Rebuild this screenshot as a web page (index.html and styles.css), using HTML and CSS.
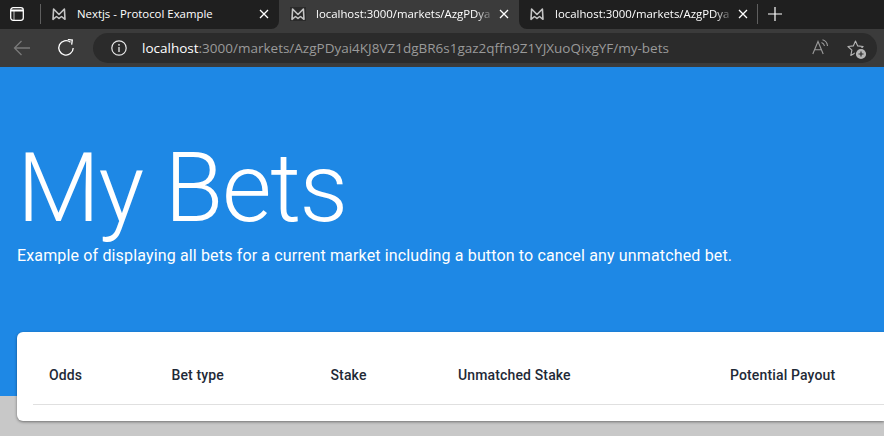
FILE: index.html
```html
<!DOCTYPE html>
<html lang="en">
<head>
<meta charset="utf-8">
<title>My Bets</title>
<link rel="stylesheet" href="styles.css">
</head>
<body>
<svg class="defs" width="0" height="0" aria-hidden="true">
  <symbol id="logo" viewBox="0 0 16 14">
    <path d="M2 12.300 L2.600 2 L8 7.500 L13.400 2 L14 12.300 L10.500 9.500 L8 11.500 L5.500 9.500 Z" fill="none" stroke="#c4c4c4" stroke-width="1.600" stroke-linejoin="round"/>
  </symbol>
  <symbol id="close" viewBox="0 0 10 10">
    <path d="M1 1 L9 9 M9 1 L1 9" stroke="#fff" stroke-width="1.300" fill="none"/>
  </symbol>
</svg>
<header class="browser">
  <div class="tabstrip">
    <div class="strip-start">
      <svg class="tabs-icon" width="14" height="14" viewBox="0 0 14 14"><rect x="0.700" y="0.700" width="12.600" height="12.600" rx="2.500" fill="none" stroke="#fff" stroke-width="1.300"/><path d="M1 3.500 H13" stroke="#fff" stroke-width="2"/><path d="M4 4 V13" stroke="#fff" stroke-width="0.700"/></svg>
      <span class="divider"></span>
    </div>
    <div class="tab tab-first">
      <svg class="favicon"><use href="#logo"/></svg>
      <span class="tab-title">Nextjs - Protocol Example</span>
      <svg class="tab-close"><use href="#close"/></svg>
    </div>
    <div class="tab tab-active">
      <svg class="favicon"><use href="#logo"/></svg>
      <span class="tab-title tab-fade">localhost:3000/markets/AzgPDya</span>
      <svg class="tab-close"><use href="#close"/></svg>
    </div>
    <div class="tab tab-third">
      <svg class="favicon"><use href="#logo"/></svg>
      <span class="tab-title tab-fade">localhost:3000/markets/AzgPDya</span>
      <svg class="tab-close"><use href="#close"/></svg>
    </div>
    <div class="strip-end">
      <span class="divider"></span>
      <svg class="new-tab" width="14" height="14" viewBox="0 0 14 14"><path d="M7 0 V14 M0 7 H14" stroke="#fff" stroke-width="1.200" fill="none"/></svg>
    </div>
  </div>
  <div class="toolbar">
    <svg class="nav-back" width="18" height="16" viewBox="0 0 18 16"><path d="M17 8 H2 M8.500 1 L1.500 8 L8.500 15" stroke="#7a7a7a" stroke-width="1.300" fill="none"/></svg>
    <svg class="nav-reload" width="18" height="18" viewBox="0 0 18 18"><path d="M13.500 3.200 A7.200 7.200 0 1 0 16.200 9" stroke="#fff" stroke-width="1.300" fill="none"/><path d="M10.500 0.800 H15 V5.300" stroke="#fff" stroke-width="1.300" fill="none" transform="rotate(8 13 3)"/></svg>
    <div class="address">
      <svg class="info" width="16" height="16" viewBox="0 0 16 16"><circle cx="8" cy="8" r="7.200" fill="none" stroke="#e8e8e8" stroke-width="1.200"/><path d="M8 7 V12" stroke="#e8e8e8" stroke-width="1.300"/><circle cx="8" cy="4.800" r="0.900" fill="#e8e8e8"/></svg>
      <span class="url"><span class="url-host">localhost</span>:3000/markets/AzgPDyai4KJ8VZ1dgBR6s1gaz2qffn9Z1YJXuoQixgYF/my-bets</span>
      <svg class="read-aloud" width="18" height="16" viewBox="0 0 18 16"><path d="M0.800 15 L6 2.500 L11.200 15 M2.700 10.800 H9.300" stroke="#9a9a9a" stroke-width="1.100" fill="none"/><path d="M9.500 3.500 A4.500 4.500 0 0 1 12.500 7 M10.500 0.800 A7 7 0 0 1 15.500 7" stroke="#9a9a9a" stroke-width="1.100" fill="none"/></svg>
      <svg class="favorite" width="20" height="20" viewBox="0 0 20 20"><path d="M8.500 1 L10.700 5.900 L16.100 6.500 L12.100 10.200 L13.200 15.500 L8.500 12.800 L3.800 15.500 L4.900 10.200 L0.900 6.500 L6.300 5.900 Z" stroke="#b5b5b5" stroke-width="1.100" stroke-linejoin="round" fill="none"/><circle cx="14" cy="14" r="5.700" fill="#b5b5b5" stroke="#2b2b2b" stroke-width="1.200"/><path d="M14 11.500 V16.500 M11.500 14 H16.500" stroke="#2b2b2b" stroke-width="1.200"/></svg>
    </div>
  </div>
</header>
<main class="page">
  <section class="hero">
    <h1 class="hero-title">My Bets</h1>
    <p class="hero-text">Example of displaying all bets for a current market including a button to cancel any unmatched bet.</p>
  </section>
  <section class="card">
    <table class="bets">
      <thead>
        <tr>
          <th class="col-odds">Odds</th>
          <th class="col-type">Bet type</th>
          <th class="col-stake">Stake</th>
          <th class="col-unmatched">Unmatched Stake</th>
          <th class="col-payout">Potential Payout</th>
        </tr>
      </thead>
    </table>
  </section>
</main>
</body>
</html>
```
FILE: styles.css
```css
* { box-sizing: border-box; }
html, body { margin: 0; height: 100%; overflow: hidden; }
body { background: #c8c8c8; font-family: Roboto, sans-serif; }
.defs { position: absolute; }

.browser { background: #3b3b3b; font-family: "Open Sans", sans-serif; }
.tabstrip { display: flex; align-items: stretch; height: 29px; background: #3b3b3b; }
.strip-start { display: flex; align-items: center; width: 41px; padding: 0 0 1px 10px; flex: none; background: #1f1f1f; }
.tabs-icon { flex: none; }
.divider { width: 1px; height: 20px; background: #5f5f5f; flex: none; }
.strip-start .divider { margin-left: 16px; }
.strip-end { display: flex; align-items: center; flex: 1; margin-left: -1px; padding-bottom: 2px; background: #1f1f1f; }
.tab { display: flex; align-items: center; flex: none; width: 239px; padding: 0 10px 2px; color: #fff; font-size: 11.400px; }
.tab-first { width: 238px; background: #1f1f1f; border-radius: 0 0 8px 0; }
.tab-active { width: 240px; padding-left: 11px; background: #3b3b3b; }
.tab-active .favicon { background: #2a2a2a; }
.tab-third { background: #1f1f1f; border-radius: 0 0 0 8px; }
.favicon { width: 16px; height: 14px; flex: none; margin-right: 10px; }
.tab-title { flex: 1; min-width: 0; white-space: nowrap; overflow: hidden; }
.tab-fade { -webkit-mask-image: linear-gradient(90deg, #000 92%, rgba(0,0,0,.25)); mask-image: linear-gradient(90deg, #000 92%, rgba(0,0,0,.25)); }
.tab-close { width: 10px; height: 10px; flex: none; margin-left: 9px; }
.new-tab { flex: none; margin-left: 10px; }

.toolbar { display: flex; align-items: center; height: 38px; padding: 0 7px 0 13px; }
.nav-back { flex: none; }
.nav-reload { flex: none; margin-left: 26px; }
.address { display: flex; align-items: center; flex: 1; height: 30px; margin-left: 18px; padding: 0 10px 0 18px; background: #2b2b2b; border-radius: 15px; }
.info { flex: none; }
.url { flex: 1; margin-left: 15px; font-size: 13.500px; color: #9a9a9a; white-space: nowrap; }
.url-host { color: #fff; }
.read-aloud { flex: none; margin: -2px 17px 0 0; }
.favorite { flex: none; margin-top: 4px; }

.page { display: flex; flex-direction: column; }
.hero { height: 329px; padding: 65px 17px 0; background: #1e88e5; color: #fff; }
.hero-title { margin: 0; font-size: 96px; font-weight: 300; line-height: 1.167; letter-spacing: -1.5px; }
.hero-text { margin: 0; font-size: 16px; line-height: 1.5; letter-spacing: 0.15px; }

.card { height: 89px; margin: -64px 0 0 17px; padding: 14px 0 0 16px; background: #fff; border-radius: 6px 0 0 6px; box-shadow: 0 1px 3px rgba(0,0,0,.45); }
.bets { border-collapse: collapse; table-layout: fixed; width: 100%; }
.bets th { height: 58px; padding: 0 16px; border-bottom: 1px solid #e0e0e0; color: #1f2a37; font-size: 14px; font-weight: 500; text-align: left; letter-spacing: 0.14px; }
.col-odds { width: 122.500px; }
.col-type { width: 159px; }
.col-stake { width: 127.500px; }
.col-unmatched { width: 272px; }
```
